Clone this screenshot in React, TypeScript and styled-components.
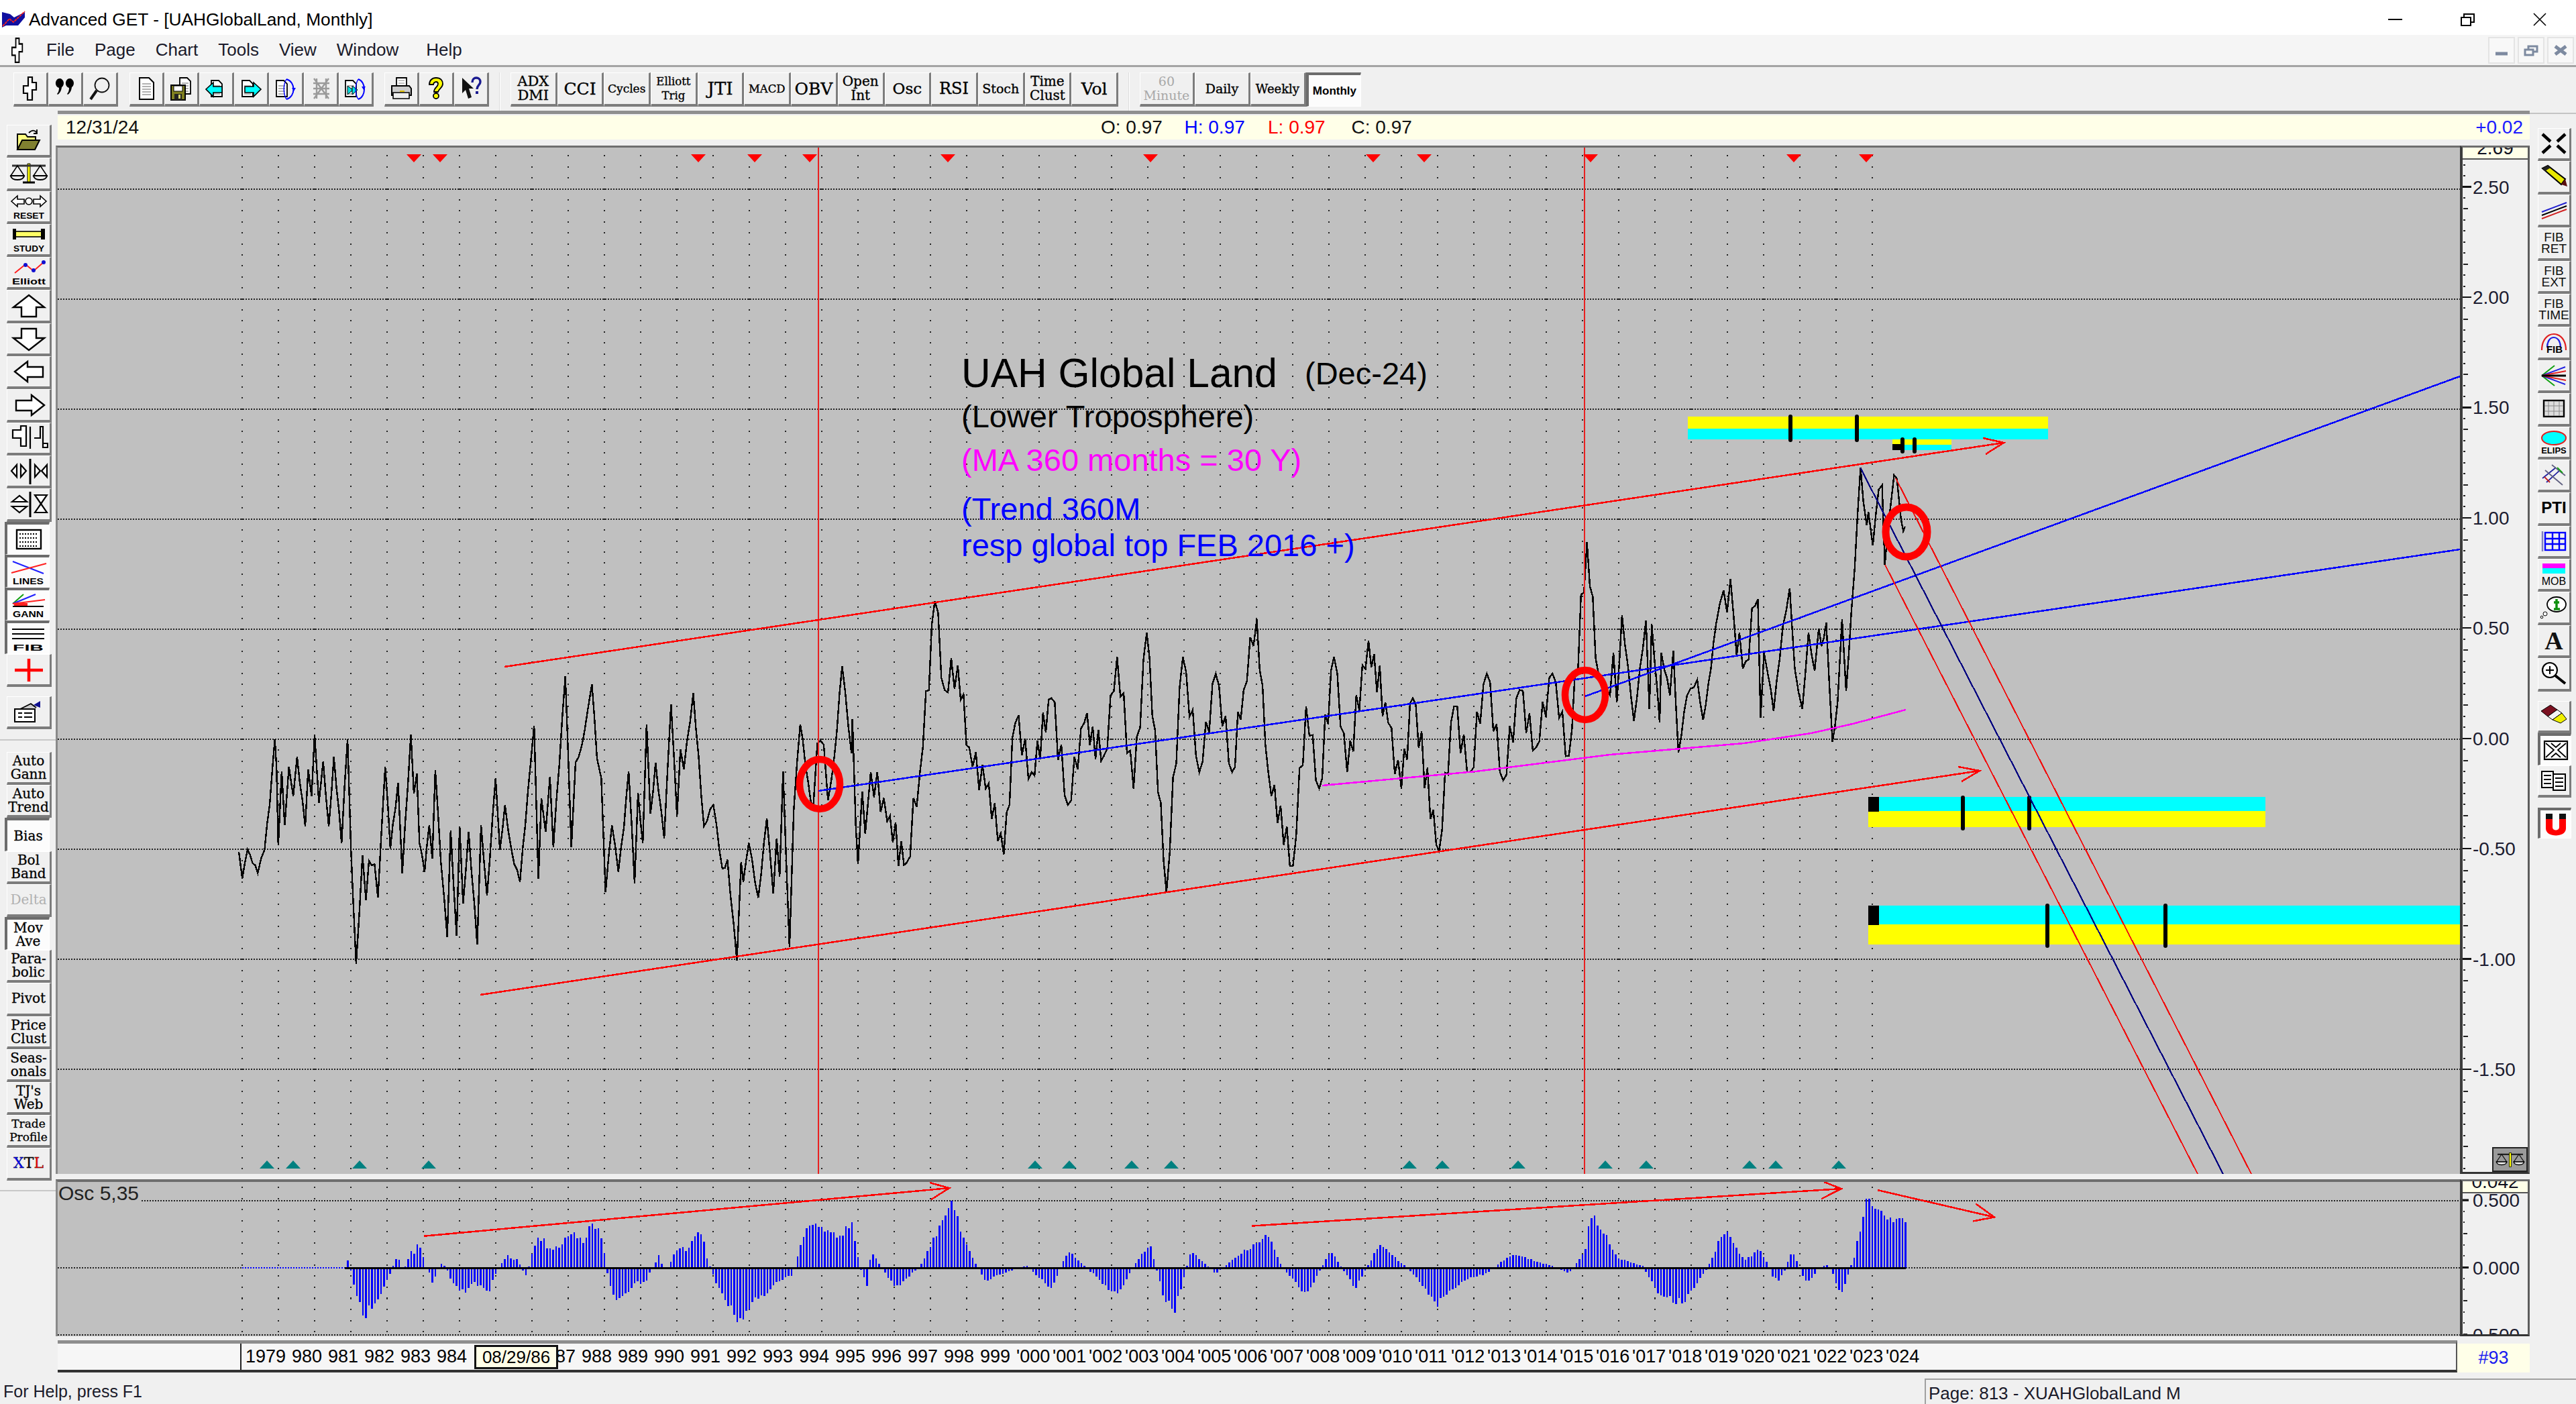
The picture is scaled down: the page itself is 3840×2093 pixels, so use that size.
import React from "react";
import styled, { createGlobalStyle, css } from "styled-components";

const Global = createGlobalStyle`
  html, body { margin: 0; padding: 0; background: #f0f0f0; }
  #root { width: 3840px; height: 2093px; overflow: hidden; }
  * { box-sizing: border-box; }
`;

const SANS = `"Liberation Sans", Arial, sans-serif`;
const SLAB = `"DejaVu Serif", "Liberation Serif", serif`;
const PALE = "#ffffe8";

/* ---------- page structure ---------- */
const Page = styled.div`
  width: 3840px; height: 2093px; display: flex; flex-direction: column;
  background: #f0f0f0; font-family: ${SANS}; color: #000;
`;
const TitleBar = styled.div`
  height: 52px; background: #fff; display: flex; align-items: center;
  padding-left: 3px; font-size: 26.3px; padding-top: 6px;
`;
const TitleText = styled.span`margin-left: 4px; flex: 1;`;
const WinControl = styled.div`
  width: 108px; height: 46px; display: flex; align-items: center; justify-content: center;
`;
const MenuBar = styled.div`
  height: 45px; display: flex; align-items: center; gap: 30px; padding-left: 13px;
  background: #f5f5f5; font-size: 26px; color: #1a1a2a;
`;
const MenuItem = styled.span<{ $extra?: number }>`margin-right: ${(p) => p.$extra ?? 0}px;`;
const MenuLead = styled.span`display: flex; width: 26px;`;
const MdiGroup = styled.div`margin-left: auto; display: flex; gap: 4px; padding-right: 3px;`;
const MdiBtn = styled.div`
  width: 40px; height: 40px; display: flex; align-items: center; justify-content: center;
  border: 2px solid #e4e4e4; background: #f8f8f8;
`;
const ToolRow = styled.div`
  height: 68px; display: flex; align-items: flex-start; padding: 8px 0 0 20px;
  border-top: 3px solid #a4a4a4; background: #f0f0f0;
`;
const BtnGroup = styled.div<{ $gap?: number }>`display: flex; margin-left: ${(p) => p.$gap ?? 0}px;`;
const ToolDivider = styled.div<{ $gap: number }>`
  width: 2px; height: 57px; margin: 0 15px 0 ${(p) => p.$gap}px; background: #dcdcdc; border-right: 1px solid #fff;
`;

const raised = css`
  border-style: solid; border-width: 1px 3px 4px 1px;
  border-color: #fff #7c7c7c #7c7c7c #fff; background: #f0f0f0;
`;
const pressed = css`
  border-style: solid; border-width: 4px 1px 1px 4px;
  border-color: #6c6c6c #fff #fff #6c6c6c; background: #fcfcfc;
`;
const IconBtn = styled.div`
  ${raised}; width: 52px; height: 51px; display: flex; align-items: center; justify-content: center;
`;
const TextBtn = styled.div<{ $size?: number; $w?: number; $down?: boolean; $off?: boolean; $sans?: boolean }>`
  ${(p) => (p.$down ? pressed : raised)};
  width: ${(p) => p.$w ?? 69.7}px; height: 51px; display: flex; align-items: center; justify-content: center;
  text-align: center; overflow: hidden;
  font-family: ${(p) => (p.$sans ? SANS : SLAB)}; font-size: ${(p) => p.$size ?? 19}px; line-height: 21px;
  color: ${(p) => (p.$off ? "#a8a8a8" : "#000")};
  -webkit-text-stroke: ${(p) => (p.$off || p.$sans ? 0 : 0.35)}px ${(p) => (p.$off ? "#a8a8a8" : "#000")};
  font-weight: ${(p) => (p.$sans ? 700 : 400)};
`;

const Main = styled.div`height: 1885px; display: flex;`;
const LeftCol = styled.div`
  width: 83px; padding: 21px 0 0 10px; display: flex; flex-direction: column;
`;
const SideStack = styled.div<{ $pitch: number; $mt?: number }>`
  display: grid; grid-auto-rows: ${(p) => p.$pitch}px; margin-top: ${(p) => p.$mt ?? 0}px;
`;
const SideBtn = styled.div<{ $down?: boolean }>`
  ${(p) => (p.$down ? pressed : raised)};
  width: 67px; display: flex; align-items: center; justify-content: center; text-align: center;
  margin-left: ${(p) => (p.$down ? -3 : 0)}px;
`;
const SideLabel = styled.div<{ $off?: boolean; $size?: number }>`
  font-family: ${SLAB}; font-size: ${(p) => p.$size ?? 20}px; line-height: 20px; white-space: nowrap;
  color: ${(p) => (p.$off ? "#b0b0b0" : "#000")};
  -webkit-text-stroke: ${(p) => (p.$off ? 0 : 0.3)}px ${(p) => (p.$off ? "#b0b0b0" : "#000")};
`;
const Rule = styled.div<{ $mt: number }>`
  height: 2px; background: #c8c8c8; margin: ${(p) => p.$mt}px 0 0 -10px; width: 83px;
`;
const CenterCol = styled.div`width: 3688px; display: flex; flex-direction: column;`;
const InfoBar = styled.div`
  height: 43px; margin-left: 3px; border-top: 5px solid #8e8e8e; padding-top: 2px;
  display: grid; grid-template-columns: 1555px repeat(4, 124.5px) 1fr;
  align-items: center; background: linear-gradient(#f0f0f0 2px, ${PALE} 2px);
  font-size: 28px; padding-left: 0;
`;
const InfoCell = styled.span<{ $c?: string; $pad?: number; $right?: boolean }>`
  color: ${(p) => p.$c ?? "#111"}; padding-left: ${(p) => p.$pad ?? 0}px;
  text-align: ${(p) => (p.$right ? "right" : "left")}; padding-right: ${(p) => (p.$right ? 10 : 0)}px;
  white-space: nowrap;
`;
const ChartRow = styled.div`height: 1533px; margin-top: 9px; display: flex;`;
const ChartPane = styled.div`
  flex: 1; border-top: 3px solid #6e6e6e; border-left: 3px solid #8a8a8a; background: #c0c0c0; position: relative;
`;
const Plot = styled.svg`display: block; width: 100%; height: 100%;`;
const ScaleCol = styled.div`
  width: 104px; border-left: 4px solid #3c3c3c; border-right: 3px solid #5c5c5c; border-top: 3px solid #6e6e6e;
  border-bottom: 3px solid #333; background: #f0f0f0; display: flex; flex-direction: column; position: relative;
`;
const ScaleTop = styled.div`
  height: 18px; background: ${PALE}; border-bottom: 2px solid #555; overflow: hidden; text-align: center;
  font-size: 28px; line-height: 18px; color: #112;
`;
const ScaleTopText = styled.span`display: block; margin-top: -8px;`;
const ScaleSvg = styled.svg`display: block; flex: 1; width: 100%; min-height: 0;`;
const TickText = styled.text`font-family: ${SANS}; font-size: 28px; fill: #1c1c30;`;
const ScaleCorner = styled.div`
  position: absolute; right: 0; bottom: 0; width: 53px; height: 37px; background: #9a9a9a;
  border: 2px solid #222; display: flex; align-items: center; justify-content: center;
`;
const OscRow = styled.div`height: 234px; margin-top: 8px; display: flex;`;
const OscPane = styled.div`
  flex: 1; border-top: 4px solid #6e6e6e; border-left: 3px solid #8a8a8a; background: #c0c0c0; position: relative;
`;
const OscLabel = styled.div`
  position: absolute; left: 1px; top: 2px; font-size: 30px; line-height: 30px; color: #222;
`;
const DateRow = styled.div`height: 48px; margin-top: 6px; display: flex;`;
const DateStrip = styled.div`
  flex: 1; position: relative; margin-left: 3px; background: #f6f6f6;
  border-top: 5px solid #8e8e8e; border-bottom: 4px solid #333; border-right: 2px solid #555;
  display: flex; align-items: center; padding-left: 271px; font-size: 27px; overflow: hidden; white-space: nowrap;
`;
const YearTick = styled.div`position: absolute; left: 272px; top: 0; bottom: 0; width: 2px; background: #222;`;
const YearLabel = styled.span<{ $w: number }>`display: block; width: ${(p) => p.$w}px; text-align: right; flex: none; padding-right: 9px;`;
const DateFlag = styled.div`
  position: absolute; left: 621px; top: 2px; bottom: 1px; width: 125px; border: 3px solid #111; background: ${PALE};
  display: flex; align-items: center; justify-content: center; font-size: 26px;
`;
const BarCount = styled.div`
  width: 108px; background: ${PALE}; margin-top: 5px; display: flex; align-items: center; justify-content: center;
  color: #1a1af0; font-size: 27px;
`;
const RightCol = styled.div`
  width: 69px; padding: 21px 0 0 12px; border-top: 2px solid #c4c4c4; margin-top: 3px; display: flex; flex-direction: column; margin-left: 0;
`;
const RightBtn = styled.div<{ $down?: boolean }>`
  ${(p) => (p.$down ? pressed : raised)};
  width: 50px; display: flex; align-items: center; justify-content: center; text-align: center;
`;
const RightLabel = styled.div`font-size: 19px; line-height: 17px; letter-spacing: 0; color: #111;`;
const RightBold = styled.div`font-size: 24px; font-weight: 700; color: #000;`;
const StatusBar = styled.div`
  height: 43px; display: grid; grid-template-columns: 2869px 1fr; color: #1a1a2a;
`;
const StatusCell = styled.div<{ $sunk?: boolean }>`
  display: flex; align-items: center; padding: 5px 0 0 ${(p) => (p.$sunk ? 4 : 5)}px;
  font-size: ${(p) => (p.$sunk ? 26 : 25)}px;
  ${(p) => p.$sunk && css`border-left: 2px solid #a0a0a0; border-top: 2px solid #a0a0a0; margin-top: 5px;`}
`;

/* ---------- chart text ---------- */
const Note = styled.text<{ $c?: string; $s: number }>`
  font-family: ${SANS}; font-size: ${(p) => p.$s}px; fill: ${(p) => p.$c ?? "#000"};
`;
const Mini = styled.text<{ $s?: number; $w?: number; $serif?: boolean }>`
  font-family: ${(p) => (p.$serif ? `"Liberation Serif", serif` : SANS)}; font-size: ${(p) => p.$s ?? 11}px;
  font-weight: ${(p) => p.$w ?? 700}; text-anchor: middle;
`;

/* ---------- icons ---------- */
const Ic: React.FC<{ w?: number; h?: number; vb?: string; children: React.ReactNode }> = ({ w = 32, h = 36, vb = "0 0 32 36", children }) => (
  <svg width={w} height={h} viewBox={vb} preserveAspectRatio="none" style={{ display: "block" }}>{children}</svg>
);
const Doc = ({ x = 0, y = 0 }: { x?: number; y?: number }) => (
  <g transform={`translate(${x} ${y})`}>
    <path d="M0 0h11l5 5v19H0z" fill="#fff" stroke="#000" strokeWidth="1.8" />
    <path d="M3 8h10M3 12h10M3 16h10M3 20h10" stroke="#999" strokeWidth="1.4" />
  </g>
);
const CursorShape = ({ s = 1 }: { s?: number }) => (
  <polygon transform={`scale(${s})`} points="13,1 19,1 19,9 25,9 25,20 19,20 19,35 12,35 12,25 6,25 6,14 13,14" fill="#fff" stroke="#000" strokeWidth="2.2" />
);
const topIcons: React.ReactNode[] = [
  <Ic key="c"><CursorShape /></Ic>,
  <Ic key="q"><path d="M2 9a6 7 0 1 1 9 7c-.5 5-3 9-6 11l-1-1c2-2 3-5 3-9a6 7 0 0 1-5-8z" /><path d="M17 9a6 7 0 1 1 9 7c-.5 5-3 9-6 11l-1-1c2-2 3-5 3-9a6 7 0 0 1-5-8z" /></Ic>,
  <Ic key="m"><circle cx="19" cy="13" r="10.5" fill="none" stroke="#111" strokeWidth="1.8" /><path d="M11 21L2 34" stroke="#111" strokeWidth="4" /></Ic>,
  <Ic key="d"><path d="M6 2h14l7 7v25H6z" fill="#fff" stroke="#000" strokeWidth="2" /><path d="M10 11h13M10 15h13M10 19h13M10 23h13M10 27h13" stroke="#999" strokeWidth="1.6" /></Ic>,
  <Ic key="s"><Doc x={14} y={2} /><rect x="1" y="13" width="21" height="22" fill="#808020" stroke="#000" strokeWidth="2" /><rect x="5" y="14" width="13" height="8" fill="#fff" stroke="#000" /><rect x="6" y="26" width="11" height="9" fill="#222" /><rect x="12" y="27" width="3" height="6" fill="#d8d870" /></Ic>,
  <Ic key="l"><Doc x={9} y={6} /><polygon points="1,19 12,9 12,15 25,15 25,24 12,24 12,30" fill="#00ffff" stroke="#000" strokeWidth="1.6" /></Ic>,
  <Ic key="r"><Doc x={3} y={6} /><polygon points="31,19 20,9 20,15 7,15 7,24 20,24 20,30" fill="#00ffff" stroke="#000" strokeWidth="1.6" /></Ic>,
  <Ic key="cy"><Doc x={2} y={6} /><path d="M17 4c14 4 14 26 0 30" fill="none" stroke="#0000ff" strokeWidth="2" /><path d="M17 4c-5 8-5 22 0 30" fill="none" stroke="#0000ff" strokeWidth="1.4" /><polygon points="25,17 31,17 28,22" fill="#0000ff" /></Ic>,
  <Ic key="x"><g stroke="#9a9a9a" strokeWidth="2.4" fill="none"><path d="M6 3l22 30M28 3L6 33M5 10h24M5 18h24M5 26h24M10 3v30M24 3v30" /></g></Ic>,
  <Ic key="cy2"><Doc x={1} y={6} /><polygon points="4,14 12,20 4,27" fill="#00e0e0" stroke="#000" /><polygon points="11,14 19,20 11,27" fill="#00e0e0" stroke="#000" /><path d="M20 4c12 4 12 26 0 30" fill="none" stroke="#0000ff" strokeWidth="2" /><path d="M20 4c-5 8-5 22 0 30" fill="none" stroke="#0000ff" strokeWidth="1.4" /><polygon points="25,15 31,15 28,20" fill="#0000ff" /></Ic>,
  <Ic key="p"><path d="M9 2h15v12H9z" fill="#fff" stroke="#000" strokeWidth="1.8" /><path d="M12 6h9M12 10h9" stroke="#888" /><path d="M2 14h26l3 4v10H2z" fill="#ccc" stroke="#000" strokeWidth="2" /><path d="M4 24h24v9H4z" fill="#eee" stroke="#000" strokeWidth="1.6" /><rect x="14" y="21" width="7" height="2" fill="#e0c000" /></Ic>,
  <Ic key="h"><path d="M16 2c7 0 10 4 10 9 0 6-6 7-7 12h-6c0-7 6-7 6-12 0-2-1-3-3-3s-4 2-4 4H6C6 6 10 2 16 2z" fill="#ffff00" stroke="#000" strokeWidth="1.8" /><circle cx="16" cy="29" r="4" fill="#ffff00" stroke="#000" strokeWidth="1.8" /></Ic>,
  <Ic key="hq"><polygon points="3,2 3,25 8,20 12,33 17,31 13,18 20,18" fill="#111" /><path d="M18 9c0-5 3-7 6-7s6 2 6 6c0 5-5 5-5 11" fill="none" stroke="#1a1a90" strokeWidth="3.4" /><rect x="23" y="22" width="4" height="4" fill="#1a1a90" /></Ic>,
];

const SV = ({ c, t }: { c: React.ReactNode; t?: string }) => (
  <Ic w={58} h={40} vb="0 0 58 40">
    {c}
    {t && <Mini x="29" y="38" $s={13} fill="#000" textLength={t === "Elliott" ? 50 : 46} lengthAdjust="spacingAndGlyphs">{t}</Mini>}
  </Ic>
);
const arrow = (pts: string) => <polygon points={pts} fill="#fff" stroke="#000" strokeWidth="2.4" />;
const leftIcons: React.ReactNode[] = [
  <Ic key="o" w={40} h={34} vb="0 0 40 34"><path d="M3 31V8h12l3 4h12v6" fill="#ffff80" stroke="#000" strokeWidth="2" /><path d="M3 31l7-14h26l-7 14z" fill="#808030" stroke="#000" strokeWidth="2" /><path d="M20 6c5-5 9-4 12 0M32 1v6h-5" fill="none" stroke="#000" strokeWidth="1.8" /></Ic>,
  <SV key="sc" c={<g><path d="M27 6h4v28h-4z" fill="#ffff00" stroke="#000" /><path d="M4 9h50" stroke="#333" strokeWidth="3" /><path d="M12 9L2 24h20zM46 9L36 24h20z" fill="none" stroke="#000" strokeWidth="1.6" /><path d="M2 24c1 8 19 8 20 0zM36 24c1 8 19 8 20 0z" fill="#eee" stroke="#000" strokeWidth="2" /><path d="M20 34h18" stroke="#000" strokeWidth="3" /></g>} />,
  <SV key="re" t="RESET" c={<g fill="#fff" stroke="#000" strokeWidth="1.6"><polygon points="3,12 12,4 12,9 22,9 22,16 12,16 12,20" /><polygon points="55,12 46,4 46,9 36,9 36,16 46,16 46,20" /><circle cx="29" cy="12" r="5" /></g>} />,
  <SV key="st" t="STUDY" c={<g><rect x="9" y="8" width="40" height="8" fill="#ffff66" stroke="#000" strokeWidth="1.6" /><rect x="5" y="4" width="5" height="16" /><rect x="47" y="4" width="6" height="16" /></g>} />,
  <SV key="el" t="Elliott" c={<g><path d="M8 21L24 8l12 10L52 4" fill="none" stroke="#ff2020" strokeWidth="2" /><circle cx="24" cy="9" r="3" fill="#1010d0" /><circle cx="36" cy="17" r="3" fill="#1010d0" /><circle cx="51" cy="5" r="3" fill="#1010d0" /></g>} />,
  <SV key="u" c={arrow("29,4 52,22 40,22 40,36 18,36 18,22 6,22")} />,
  <SV key="d" c={arrow("29,37 52,19 40,19 40,5 18,5 18,19 6,19")} />,
  <SV key="l" c={arrow("8,20 27,5 27,13 50,13 50,28 27,28 27,35")} />,
  <SV key="r" c={arrow("52,20 33,5 33,13 10,13 10,28 33,28 33,35")} />,
  <SV key="ud" c={<g fill="#fff" stroke="#000" strokeWidth="2.2"><path d="M5 8h12V2h8v30h-8V20H5z" /><path d="M37 20h9V3h4v25h7v6h-7v-14" /><path d="M31 3v33" fill="none" /></g>} />,
  <SV key="lr" c={<g fill="#fff" stroke="#000" strokeWidth="2.2"><polygon points="3,20 11,11 11,29" /><polygon points="25,20 17,11 17,29" /><polygon points="38,11 46,20 38,29" /><polygon points="56,11 48,20 56,29" /><path d="M31 2v38" strokeWidth="3" /></g>} />,
  <SV key="sq" c={<g fill="#fff" stroke="#000" strokeWidth="2.2"><polygon points="4,17 15,8 26,17" /><polygon points="4,24 15,33 26,24" /><path d="M31 2v38" strokeWidth="3" /><polygon points="38,7 56,7 47,20" /><polygon points="38,33 56,33 47,20" /></g>} />,
  <SV key="g" c={<g><rect x="12" y="6" width="36" height="28" fill="#fff" stroke="#000" strokeWidth="2.4" /><path d="M16 12h28M16 18h28M16 24h28M16 30h28" stroke="#000" strokeWidth="2" strokeDasharray="2 2" /></g>} />,
  <SV key="li" t="LINES" c={<g fill="none" strokeWidth="2"><path d="M6 4l46 18" stroke="#2020ff" /><path d="M4 21L56 7" stroke="#ff2020" /></g>} />,
  <SV key="ga" t="GANN" c={<g fill="none" strokeWidth="2"><path d="M6 18L22 4" stroke="#10a010" /><path d="M6 18L40 4" stroke="#2020ff" /><path d="M6 18l48-6" stroke="#ff2020" /><path d="M6 22h46" stroke="#000" /><path d="M8 19h20" stroke="#ff2020" strokeWidth="4" /></g>} />,
  <SV key="fi" t="FIB" c={<path d="M5 6h48M5 13h48M5 20h48" stroke="#000" strokeWidth="2" />} />,
  <SV key="cr" c={<path d="M29 4v34M8 21h42" stroke="#ff0000" strokeWidth="4.5" />} />,
];
const reportIcon = (
  <Ic w={46} h={36} vb="0 0 46 36"><path d="M10 14L26 6l8 6" fill="#ccc" stroke="#000" strokeWidth="1.8" /><path d="M2 14h30v19H2z" fill="#fff" stroke="#000" strokeWidth="2" /><path d="M7 20h6M16 20h12M7 26h6M16 26h12" stroke="#000" strokeWidth="1.8" /><path d="M30 8l10-6v10z" fill="#101090" /></Ic>
);
const RV = ({ c }: { c: React.ReactNode }) => <Ic w={42} h={38} vb="0 0 42 38">{c}</Ic>;
const rightIcons: React.ReactNode[] = [
  <RV key="x" c={<path d="M4 5l12 11M26 22l12 11M38 5L26 16M16 22L4 33" stroke="#000" strokeWidth="4.5" />} />,
  <RV key="pn" c={<g><path d="M4 6l8-4 26 20-6 8z" fill="#e8e800" stroke="#000" strokeWidth="2" /><path d="M32 30l6-8 3 11z" fill="#5a1010" /><path d="M4 6l8-4 4 3-8 5z" fill="#222" /></g>} />,
  <RV key="tl" c={<g strokeWidth="2" fill="none"><path d="M3 22L40 8" stroke="#2020d0" /><path d="M3 27L40 13" stroke="#000" /><path d="M3 32L40 18" stroke="#d02020" /></g>} />,
  <RightLabel key="fr">FIB<br />RET</RightLabel>,
  <RightLabel key="fe">FIB<br />EXT</RightLabel>,
  <RightLabel key="ft">FIB<br />TIME</RightLabel>,
  <RV key="fa" c={<g fill="none" strokeWidth="2.2"><path d="M3 30C3 -2 39 -2 39 30" stroke="#e02020" /><path d="M11 26C11 6 31 6 31 26" stroke="#2020e0" /><Mini x="22" y="34" $s={15} fill="#000">FIB</Mini></g>} />,
  <RV key="fn" c={<g fill="none" strokeWidth="2"><path d="M3 19L22 4" stroke="#10a010" /><path d="M3 19L22 34" stroke="#10a010" /><path d="M3 19L38 6" stroke="#2020e0" /><path d="M3 19L38 32" stroke="#2020e0" /><path d="M3 19l36-7M3 19l36 7" stroke="#e02020" /><path d="M3 19h36" stroke="#000" strokeWidth="3" /></g>} />,
  <RV key="gr" c={<g><rect x="6" y="7" width="30" height="24" fill="#ddd" stroke="#000" strokeWidth="2.4" /><path d="M13 8v22M21 8v22M29 8v22M7 15h28M7 23h28" stroke="#888" /></g>} />,
  <RV key="el" c={<g><ellipse cx="21" cy="13" rx="18" ry="10" fill="#00ffff" stroke="#e02020" strokeWidth="2" /><Mini x="21" y="36" $s={13} fill="#000">ELIPS</Mini></g>} />,
  <RV key="ch" c={<g strokeWidth="1.8" fill="none"><path d="M4 24L24 8M10 30L30 12" stroke="#2020a0" /><path d="M8 12l26 22M18 4l20 16" stroke="#606080" /><path d="M7 22l8 8" stroke="#c02020" /><path d="M26 8l8 8" stroke="#10a010" /></g>} />,
  <RightBold key="pt">PTI</RightBold>,
  <RV key="tb" c={<g fill="none" stroke="#0000ff" strokeWidth="2.4"><rect x="8" y="6" width="30" height="26" /><path d="M8 15h30M8 23h30M19 6v26M29 6v26" /><path d="M4 4v30" stroke="#8080c0" /></g>} />,
  <RV key="mo" c={<g><rect x="4" y="3" width="34" height="7" fill="#ff00ff" /><rect x="4" y="10" width="34" height="8" fill="#00ffff" /><Mini x="21" y="35" $s={16} $w={400} fill="#000">MOB</Mini></g>} />,
  <RV key="ba" c={<g><ellipse cx="25" cy="14" rx="14" ry="11" fill="#fff" stroke="#000" strokeWidth="1.8" /><circle cx="8" cy="28" r="3" fill="#fff" stroke="#000" /><circle cx="3" cy="33" r="1.8" fill="#fff" stroke="#000" /><path d="M25 6v15M21 21h9M21 11h8" stroke="#109010" strokeWidth="3.5" /></g>} />,
  <RV key="a" c={<Mini x="21" y="32" $s={38} $serif fill="#111">A</Mini>} />,
  <RV key="z" c={<g><circle cx="15" cy="14" r="11" fill="#fff" stroke="#000" strokeWidth="2.2" /><path d="M9 14h12M15 8v12" stroke="#000" strokeWidth="2" /><path d="M23 22l15 12" stroke="#000" strokeWidth="4" /></g>} />,
];
const rightLower: React.ReactNode[] = [
  <RV key="e" c={<g><path d="M2 12L16 3l10 7-14 10z" fill="#7a1020" stroke="#000" /><path d="M12 20l14-10 7 5-14 10z" fill="#f4f4f4" stroke="#000" /><path d="M19 25l14-10 7 9-9 6z" fill="#f0f000" stroke="#000" /></g>} />,
  <RV key="m" c={<g><rect x="4" y="6" width="34" height="27" fill="#fff" stroke="#000" strokeWidth="2.2" /><path d="M6 9l12 10L6 30M36 9L24 19l12 11M14 9l7 6 7-6M14 30l7-6 7 6" fill="none" stroke="#000" strokeWidth="1.8" /></g>} />,
  <RV key="b" c={<g><path d="M3 6h17v24H3z" fill="#fff" stroke="#000" strokeWidth="2" /><path d="M20 10h18v24H20z" fill="#fff" stroke="#000" strokeWidth="2" /><path d="M6 12h11M6 18h11M6 24h11M23 16h12M23 22h12M23 28h12" stroke="#000" strokeWidth="1.8" /></g>} />,
  <RV key="u" c={<g><path d="M6 12h10v12c0 6 10 6 10 0V12h10v14c0 14-30 14-30 0z" fill="#ff0000" /><rect x="6" y="4" width="10" height="8" fill="#111" /><rect x="26" y="4" width="10" height="8" fill="#111" /></g>} />,
];

/* ---------- chart data (page coordinates) ---------- */
const z8 = (a: number[][]) => a.map(([x, y]) => [x / 1.568 + 300, y / 3 + 1000]);
const disp = (a: number[][]) => a.map(([x, y]) => [x * 2.449, y * 2.449]);
const z7 = (a: number[][]) => a.map(([x, y]) => [x / 1.96 + 2400, y / 3 + 580]);
const traceEarly = z8([[88,810],[96,930],[108,800],[120,860],[132,905],[148,800],[160,600],[172,305],[176,430],[180,780],[188,450],[195,690],[205,430],[215,560],[224,385],[243,695],[250,440],[258,560],[265,285],[275,590],[285,405],[298,695],[310,385],[328,770],[342,305],[350,800],[362,1310],[377,825],[385,1025],[392,850],[405,865],[413,1015],[430,430],[442,795],[460,500],[470,905],[490,285],[497,550],[504,460],[510,770],[522,900],[533,690],[540,840],[547,445],[560,850],[575,1190],[583,715],[597,1185],[604,695],[612,1040],[625,720],[645,1225],[654,690],[668,1005],[688,480],[698,800],[710,600],[725,800],[745,945],[770,410],[778,245],[788,930],[795,570],[805,720],[815,475],[823,790],[851,25],[865,790],[875,410],[890,330],[903,180],[913,60],[925,390],[935,480],[945,990],[960,690],[975,900],[988,700],[999,450],[1013,950],[1021,545],[1032,770],[1041,240],[1050,640],[1062,410],[1082,750],[1098,150],[1112,650],[1120,350],[1128,440],[1150,100],[1175,695],[1197,600],[1218,885],[1230,845],[1252,1295],[1262,855],[1267,945],[1280,770],[1302,1015],[1322,660],[1337,995],[1345,750],[1352,920],[1360,450],[1375,1235],[1385,620],[1400,240],[1418,490],[1430,625],[1440,325],[1455,330],[1465,580],[1480,380],[1498,-20],[1520,370],[1522,215],[1530,700],[1535,865],[1545,540],[1552,730]]);
const traceMiddle = disp([[530,470],[540,500],[552,525],[560,470],[569,366],[575,420],[583,405],[590,455],[600,480],[611,520],[618,440],[628,470],[640,425],[650,490],[660,440],[672,460],[680,400],[690,480],[698,385],[710,543],[720,400],[730,470],[740,410],[750,470],[757,420],[765,377],[772,470],[787,527],[795,430],[803,480],[812,400],[820,470],[833,390],[845,440],[853,480],[860,425],[876,518],[885,430],[895,470],[905,410],[915,475],[925,420],[935,455],[945,410],[955,460],[966,330],[973,410]]);
const traceLate = z7([[0,1370],[10,1180],[20,1400],[35,1010],[70,1485],[105,1035],[115,1430],[122,1050],[145,1490],[150,1180],[175,1370],[185,1170],[200,1626],[225,1370],[255,1300],[272,1480],[295,1250],[310,1050],[332,900],[342,1000],[352,850],[370,1190],[378,1090],[388,1250],[405,1210],[415,980],[432,940],[440,1470],[450,1180],[462,1280],[478,1440],[505,1060],[525,890],[540,1250],[562,1430],[580,1090],[598,1260],[610,1070],[618,1150],[632,1045],[650,1578],[665,1400],[678,1030],[690,1350],[705,1000],[715,800],[732,350],[740,500],[750,610],[755,550],[768,700],[785,450],[795,430],[803,785],[820,520],[830,385],[838,400],[850,580],[857,635],[862,615]]);
let seed = 12345;
const rnd = () => { seed = (seed * 1664525 + 1013904223) % 4294967296; return seed / 4294967296; };
const expand = (pts: number[][], amp: number, step = 4.5) => {
  const out: number[][] = [];
  let sign = 1;
  for (let i = 0; i < pts.length - 1; i++) {
    const [x0, y0] = pts[i]; const [x1, y1] = pts[i + 1];
    const n = Math.max(1, Math.round((x1 - x0) / step));
    for (let j = 0; j < n; j++) {
      const t = j / n;
      sign = -sign;
      const wob = j ? sign * (0.4 + rnd() * 0.6) * amp * Math.sqrt(Math.sin(Math.PI * t)) : 0;
      out.push([x0 + (x1 - x0) * t, y0 + (y1 - y0) * t + wob]);
    }
  }
  out.push(pts[pts.length - 1]);
  return out;
};
const pricePoints = [...expand(traceEarly, 6), ...expand(traceMiddle, 34), ...expand(traceLate, 6)]
  .map(([x, y]) => `${x.toFixed(1)},${y.toFixed(1)}`).join(" ");

const z9 = (a: number[][]) => a.map(([x, y]) => [x / 1.206, y / 3 + 1720]);
const z10 = (a: number[][]) => a.map(([x, y]) => [x / 1.265 + 2600, y / 3 + 1720]);
const oscEnv: number[][] = [
  ...z9([[620,470],[628,470],[630,508],[635,585],[645,680],[655,755],[665,690],[680,680],[690,600],[700,545],[705,508],[712,465],[720,475],[725,525],[730,490],[740,425],[745,435],[752,375],[760,445],[765,510],[772,530],[778,585],[785,530],[790,495],[795,485],[803,510],[810,560],[822,610],[838,625],[850,580],[865,600],[880,620],[890,540],[898,510],[905,470],[910,445],[920,465],[930,465],[938,510],[945,545],[950,510],[960,390],[975,355],[985,420],[995,420],[1005,400],[1015,370],[1022,330],[1030,345],[1040,345],[1050,390],[1058,320],[1068,290],[1075,320],[1085,400],[1090,510],[1100,630],[1110,670],[1125,640],[1140,580],[1160,580],[1170,520],[1178,480],[1185,445],[1192,505],[1200,515],[1210,450],[1222,405],[1235,425],[1245,380],[1255,315],[1265,370],[1272,470],[1278,510],[1290,600],[1310,680],[1325,750],[1335,780],[1345,720],[1355,645],[1375,640],[1395,580],[1410,560],[1425,540],[1430,490],[1445,335],[1455,300],[1475,320],[1490,300],[1500,350],[1515,345],[1530,285],[1537,365],[1545,500],[1555,560],[1560,620]]),
  ...disp([[530,760],[545,785],[560,770],[572,745],[578,725],[585,745],[592,765],[600,780],[610,775],[625,770],[640,785],[650,760],[665,775],[680,790],[690,770],[700,755],[708,790],[715,800],[725,760],[740,775],[755,762],[772,750],[780,770],[795,790],[810,760],[825,785],[840,755],[860,775],[875,795],[890,780],[905,775],[920,762],[945,770],[955,775],[965,760],[968,733],[975,745],[985,765],[1000,770],[1010,790],[1025,795],[1040,770],[1050,745]]),
  ...z10([[0,470],[15,450],[25,415],[35,440],[45,490],[55,555],[65,565],[75,530],[82,480],[90,425],[100,480],[106,510],[115,575],[125,560],[133,535],[140,510],[155,490],[165,515],[175,600],[183,625],[195,550],[200,505],[208,450],[218,315],[230,185],[238,160],[245,210],[258,210],[265,250],[280,265],[295,240],[305,260]]),
];
const OSC_BASE = 1889;
const oscAt = (x: number) => {
  for (let i = 0; i < oscEnv.length - 1; i++) {
    const a = oscEnv[i]; const b = oscEnv[i + 1];
    if (x >= a[0] && x <= b[0]) return a[1] + (b[1] - a[1]) * ((x - a[0]) / (b[0] - a[0] || 1));
  }
  return OSC_BASE;
};
let oscPath = "";
for (let x = 514; x <= 2841; x += 4.5) {
  const y = oscAt(x);
  const v = OSC_BASE + (y - OSC_BASE) * (0.8 + rnd() * 0.2);
  oscPath += `M${x.toFixed(1)} ${OSC_BASE}V${v.toFixed(1)}`;
}

const COLS = Array.from({ length: 46 }, (_, i) => 361 + i * 54);
const LEVELS = [2.5, 2, 1.5, 1, 0.5, 0, -0.5, -1, -1.5];
const yOf = (v: number) => 1102 - v * 328.2;
const REDS = [617, 656, 1041, 1125, 1207, 1413, 1715, 2047, 2123, 2371, 2674, 2782];
const TEALS = [398, 437, 536, 639, 1543, 1594, 1687, 1746, 2101, 2150, 2263, 2393, 2454, 2608, 2647, 2741];

const Bar = ({ x, x2, top, mid, bottom, upper, lower }: { x: number; x2: number; top: number; mid: number; bottom: number; upper: string; lower: string }) => (
  <g shapeRendering="crispEdges">
    <rect x={x} y={top} width={x2 - x} height={mid - top} fill={upper} />
    <rect x={x} y={mid} width={x2 - x} height={bottom - mid} fill={lower} />
  </g>
);
const Mark = ({ x, y1, y2 }: { x: number; y1: number; y2: number }) => (
  <path d={`M${x} ${y1}V${y2}`} stroke="#000" strokeWidth="6" strokeLinecap="round" />
);
const Arrow = ({ d, w = 2.5 }: { d: string; w?: number }) => (
  <path d={d} fill="none" stroke="#ff0000" strokeWidth={w} shapeRendering="crispEdges" />
);

const Chart = () => (
  <Plot viewBox="86 220 3581 1530" preserveAspectRatio="none">
    {COLS.map((x) => (
      <path key={x} d={`M${x} 231.3V1748`} stroke="#222" strokeWidth="2" strokeDasharray="2 14.41" shapeRendering="crispEdges" />
    ))}
    {LEVELS.map((v) => (
      <path key={v} d={`M86 ${yOf(v)}H3667`} stroke="#222" strokeWidth="2" strokeDasharray="2 2" shapeRendering="crispEdges" />
    ))}
    <Bar x={2516} x2={3053} top={621} mid={639} bottom={655} upper="#ffff00" lower="#00ffff" />
    <Mark x={2669} y1={621} y2={656} /><Mark x={2768} y1={621} y2={656} />
    <Bar x={2821} x2={2909} top={655} mid={663} bottom={671} upper="#ffff00" lower="#00ffff" />
    <rect x={2821} y={662} width={15} height={9} fill="#000" />
    <Mark x={2836} y1={655} y2={673} /><Mark x={2854} y1={655} y2={673} />
    <Bar x={2785} x2={3377} top={1188} mid={1209} bottom={1233} upper="#00ffff" lower="#ffff00" />
    <rect x={2785} y={1188} width={16} height={22} fill="#000" />
    <Mark x={2926} y1={1189} y2={1235} /><Mark x={3025} y1={1189} y2={1235} />
    <Bar x={2785} x2={3667} top={1350} mid={1378} bottom={1408} upper="#00ffff" lower="#ffff00" />
    <rect x={2785} y={1350} width={16} height={29} fill="#000" />
    <Mark x={3052} y1={1350} y2={1410} /><Mark x={3228} y1={1350} y2={1410} />
    <polyline points={pricePoints} fill="none" stroke="#000" strokeWidth="2.4" shapeRendering="crispEdges" />
    <path d="M1220 220V1750M2362 220V1750" stroke="#e82020" strokeWidth="2" shapeRendering="crispEdges" />
    <Arrow d="M752 994L2987 660M2956 653L2987 660L2960 677" />
    <Arrow d="M716 1483L2951 1149M2919 1143L2951 1149L2924 1165" />
    <path d="M1220 1179L3667 819" stroke="#0000ff" strokeWidth="2.5" fill="none" shapeRendering="crispEdges" />
    <path d="M2363 1038L3667 561" stroke="#0000ff" strokeWidth="2.5" fill="none" shapeRendering="crispEdges" />
    <path d="M2773 697L3314 1750" stroke="#000080" strokeWidth="2.2" fill="none" shapeRendering="crispEdges" />
    <path d="M2826 713L3356 1750M2810 842L3276 1750" stroke="#f01010" strokeWidth="2" fill="none" shapeRendering="crispEdges" />
    <polyline points="1971,1171 2200,1150 2400,1125 2600,1108 2700,1093 2762,1079 2841,1058" fill="none" stroke="#ff00ff" strokeWidth="2.5" shapeRendering="crispEdges" />
    <ellipse cx="1222" cy="1169" rx="30" ry="37" fill="none" stroke="#ff0000" strokeWidth="10.5" />
    <ellipse cx="2363" cy="1036" rx="30" ry="37" fill="none" stroke="#ff0000" strokeWidth="10.5" />
    <ellipse cx="2842" cy="793" rx="31" ry="37" fill="none" stroke="#ff0000" strokeWidth="11" />
    {REDS.map((x) => <polygon key={x} points={`${x - 11},230 ${x + 11},230 ${x},242`} fill="#ff0000" />)}
    {TEALS.map((x) => <polygon key={x} points={`${x - 11},1742 ${x + 11},1742 ${x},1730`} fill="#008080" />)}
    <Note x="1433" y="577" $s={60.5}>UAH Global Land</Note>
    <Note x="1945" y="573" $s={47}>(Dec-24)</Note>
    <Note x="1433" y="637" $s={47}>(Lower Troposphere)</Note>
    <Note x="1433" y="702" $s={47} $c="#ff00ff">(MA 360 months = 30 Y)</Note>
    <Note x="1433" y="775" $s={47} $c="#0000ff">(Trend 360M</Note>
    <Note x="1433" y="829" $s={47} $c="#0000ff">resp global top FEB 2016 +)</Note>
  </Plot>
);

const Osc = () => (
  <Plot viewBox="86 1762 3581 228" preserveAspectRatio="none">
    {COLS.map((x) => (
      <path key={x} d={`M${x} 1769V1986`} stroke="#222" strokeWidth="2" strokeDasharray="2 14.4" shapeRendering="crispEdges" />
    ))}
    <path d="M211 1790H3667M86 1988H3667" stroke="#222" strokeWidth="2" strokeDasharray="2 2" shapeRendering="crispEdges" />
    <path d="M86 1889H361M2841 1889H3667" stroke="#222" strokeWidth="2" strokeDasharray="2 2" shapeRendering="crispEdges" />
    <path d="M361 1889H514" stroke="#0000ff" strokeWidth="2" strokeDasharray="2 2" shapeRendering="crispEdges" />
    <path d={oscPath} stroke="#0000ff" strokeWidth="2.4" fill="none" shapeRendering="crispEdges" />
    <path d="M514 1889H2841" stroke="#000" strokeWidth="3" shapeRendering="crispEdges" />
    <Arrow d="M632 1842L1415 1771M1386 1763L1415 1771L1388 1788" />
    <Arrow d="M1866 1827L2745 1772M2719 1762L2745 1772L2715 1787" />
    <Arrow d="M2799 1774L2973 1814M2945 1794L2973 1814L2941 1820" />
  </Plot>
);

const minorTicks = Array.from({ length: 94 }, (_, i) => 232.3 + i * 16.41);
const MainScale = () => (
  <ScaleSvg viewBox="3671 241 97 1506" preserveAspectRatio="none">
    {minorTicks.map((y, i) => (
      <path key={i} d={`M3672 ${y}h${i % 5 === 0 ? 7 : 3}`} stroke="#222" strokeWidth="2" shapeRendering="crispEdges" />
    ))}
    {LEVELS.map((v) => (
      <g key={v}>
        <path d={`M3671 ${yOf(v)}h13`} stroke="#111" strokeWidth="2.4" shapeRendering="crispEdges" />
        <TickText x="3686" y={yOf(v) + 10}>{v.toFixed(2)}</TickText>
      </g>
    ))}
  </ScaleSvg>
);
const OscScale = () => (
  <ScaleSvg viewBox="3671 1780 97 207" preserveAspectRatio="none">
    {Array.from({ length: 14 }, (_, i) => 1790 + i * 16.4).map((y, i) => (
      <path key={i} d={`M3672 ${y}h${i % 3 === 0 ? 6 : 2}`} stroke="#222" strokeWidth="2" shapeRendering="crispEdges" />
    ))}
    <path d="M3671 1790h9M3671 1889h9" stroke="#111" strokeWidth="3" />
    <TickText x="3686" y="1800">0.500</TickText>
    <TickText x="3686" y="1899">0.000</TickText>
    <TickText x="3686" y="1998">0.500</TickText>
  </ScaleSvg>
);

const topTextBtns: { t: React.ReactNode; s?: number }[] = [
  { t: <>ADX<br />DMI</>, s: 21 }, { t: "CCI", s: 25 }, { t: "Cycles", s: 17 }, { t: <>Elliott<br />Trig</>, s: 16.5 },
  { t: "JTI", s: 26 }, { t: "MACD", s: 16.5 }, { t: "OBV", s: 25 }, { t: <>Open<br />Int</>, s: 20 },
  { t: "Osc", s: 23 }, { t: "RSI", s: 24 }, { t: "Stoch", s: 19 }, { t: <>Time<br />Clust</>, s: 20 }, { t: "Vol", s: 25 },
];
const leftDown = new Set([12, 13, 14, 15]);
const studies: { t: React.ReactNode; down?: boolean; off?: boolean; small?: boolean }[] = [
  { t: <>Auto<br />Gann</> }, { t: <>Auto<br />Trend</> }, { t: "Bias", down: true }, { t: <>Bol<br />Band</> },
  { t: "Delta", off: true }, { t: <>Mov<br />Ave</>, down: true }, { t: <>Para-<br />bolic</> }, { t: "Pivot" },
  { t: <>Price<br />Clust</> }, { t: <>Seas-<br />onals</> }, { t: <>TJ's<br />Web</> }, { t: <>Trade<br />Profile</>, small: true },
];
const YEARS: string[] = ["980", "981", "982", "983", "984", "", "", "87", "988", "989", "990", "991", "992", "993", "994", "995", "996", "997", "998", "999"];
for (let i = 0; i <= 24; i++) YEARS.push(`'${String(i).padStart(3, "0")}`);

export default function App() {
  return (
    <Page>
      <Global />
      <TitleBar>
        <Ic w={36} h={26} vb="0 0 36 26">
          <path d="M0 2l12 3 6 5 16-8v8L24 22H6l-6 3z" fill="#1010a0" />
          <path d="M1 23L11 12l6 5L34 1" fill="none" stroke="#f02020" strokeWidth="2" strokeDasharray="4 1" />
        </Ic>
        <TitleText>Advanced GET - [UAHGlobalLand, Monthly]</TitleText>
        <WinControl><Ic w={21} h={20} vb="0 0 21 20"><path d="M0 10h21" stroke="#000" strokeWidth="2" /></Ic></WinControl>
        <WinControl><Ic w={21} h={20} vb="0 0 21 20"><path d="M1 7h14v12H1zM5 7V2h15v12h-5" fill="none" stroke="#000" strokeWidth="2" /></Ic></WinControl>
        <WinControl><Ic w={20} h={20} vb="0 0 20 20"><path d="M1 1l18 18M19 1L1 19" stroke="#000" strokeWidth="1.6" /></Ic></WinControl>
      </TitleBar>
      <MenuBar>
        <MenuLead><Ic w={26} h={38} vb="0 0 32 36"><CursorShape /></Ic></MenuLead>
        <MenuItem>File</MenuItem><MenuItem>Page</MenuItem><MenuItem>Chart</MenuItem><MenuItem>Tools</MenuItem><MenuItem>View</MenuItem><MenuItem $extra={11}>Window</MenuItem><MenuItem>Help</MenuItem>
        <MdiGroup>
          <MdiBtn><Ic w={22} h={20} vb="0 0 22 20"><path d="M2 15h18" stroke="#7d8aa0" strokeWidth="5" /></Ic></MdiBtn>
          <MdiBtn><Ic w={22} h={20} vb="0 0 22 20"><path d="M2 9h12v8H2zM7 9V4h13v8h-6" fill="none" stroke="#7d8aa0" strokeWidth="3" /></Ic></MdiBtn>
          <MdiBtn><Ic w={22} h={20} vb="0 0 22 20"><path d="M3 4l16 12M19 4L3 16" stroke="#7d8aa0" strokeWidth="5" /></Ic></MdiBtn>
        </MdiGroup>
      </MenuBar>
      <ToolRow>
        <BtnGroup>{topIcons.slice(0, 3).map((c, i) => <IconBtn key={i}>{c}</IconBtn>)}</BtnGroup>
        <BtnGroup $gap={17}>{topIcons.slice(3, 10).map((c, i) => <IconBtn key={i}>{c}</IconBtn>)}</BtnGroup>
        <BtnGroup $gap={16}>{topIcons.slice(10).map((c, i) => <IconBtn key={i}>{c}</IconBtn>)}</BtnGroup>
        <ToolDivider $gap={15} />
        <BtnGroup>{topTextBtns.map((b, i) => <TextBtn key={i} $size={b.s}>{b.t}</TextBtn>)}</BtnGroup>
        <ToolDivider $gap={15} />
        <BtnGroup>
          <TextBtn $w={82} $off $size={19}>60<br />Minute</TextBtn>
          <TextBtn $w={83} $size={19}>Daily</TextBtn>
          <TextBtn $w={83} $size={18}>Weekly</TextBtn>
          <TextBtn $w={82} $down $sans $size={17}>Monthly</TextBtn>
        </BtnGroup>
      </ToolRow>
      <Main>
        <LeftCol>
          <SideStack $pitch={49.3}>
            {leftIcons.map((c, i) => <SideBtn key={i} $down={leftDown.has(i)}>{c}</SideBtn>)}
          </SideStack>
          <SideStack $pitch={49} $mt={14}><SideBtn>{reportIcon}</SideBtn></SideStack>
          <Rule $mt={15} />
          <SideStack $pitch={49.2} $mt={17}>
            {studies.map((s, i) => (
              <SideBtn key={i} $down={s.down}><SideLabel $off={s.off} $size={s.small ? 17 : 20}>{s.t}</SideLabel></SideBtn>
            ))}
            <SideBtn><SideLabel $size={22}><span style={{ color: "#0000ff" }}>X</span>T<span style={{ color: "#ff0000" }}>L</span></SideLabel></SideBtn>
          </SideStack>
          <Rule $mt={14} />
        </LeftCol>
        <CenterCol>
          <InfoBar>
            <InfoCell $pad={12}>12/31/24</InfoCell>
            <InfoCell>O: 0.97</InfoCell>
            <InfoCell $c="#0000ff">H: 0.97</InfoCell>
            <InfoCell $c="#ff0000">L: 0.97</InfoCell>
            <InfoCell>C: 0.97</InfoCell>
            <InfoCell $c="#1a1aff" $right>+0.02</InfoCell>
          </InfoBar>
          <ChartRow>
            <ChartPane><Chart /></ChartPane>
            <ScaleCol>
              <ScaleTop><ScaleTopText>2.69</ScaleTopText></ScaleTop>
              <MainScale />
              <ScaleCorner>
                <Ic w={44} h={30} vb="0 0 58 40"><path d="M4 9h50" stroke="#222" strokeWidth="3" /><path d="M27 6h4v28h-4z" fill="#ffff00" stroke="#000" /><path d="M12 9L2 24h20zM46 9L36 24h20z" fill="none" stroke="#111" strokeWidth="1.6" /><path d="M2 24c1 8 19 8 20 0zM36 24c1 8 19 8 20 0z" fill="#eee" stroke="#000" strokeWidth="2" /></Ic>
              </ScaleCorner>
            </ScaleCol>
          </ChartRow>
          <OscRow>
            <OscPane>
              <Osc />
              <OscLabel>Osc 5,35</OscLabel>
            </OscPane>
            <ScaleCol>
              <ScaleTop><ScaleTopText>0.042</ScaleTopText></ScaleTop>
              <OscScale />
            </ScaleCol>
          </OscRow>
          <DateRow>
            <DateStrip>
              <YearTick />
              <YearLabel $w={78}>1979</YearLabel>
              {YEARS.map((y, i) => <YearLabel key={i} $w={54}>{y}</YearLabel>)}
              <DateFlag>08/29/86</DateFlag>
            </DateStrip>
            <BarCount>#93</BarCount>
          </DateRow>
        </CenterCol>
        <RightCol>
          <SideStack $pitch={49.4}>
            {rightIcons.map((c, i) => <RightBtn key={i}>{c}</RightBtn>)}
          </SideStack>
          <SideStack $pitch={48} $mt={14}>
            {rightLower.slice(0, 3).map((c, i) => <RightBtn key={i} $down={i === 1}>{c}</RightBtn>)}
          </SideStack>
          <SideStack $pitch={46} $mt={15}><RightBtn $down>{rightLower[3]}</RightBtn></SideStack>
        </RightCol>
      </Main>
      <StatusBar>
        <StatusCell>For Help, press F1</StatusCell>
        <StatusCell $sunk>Page: 813 - XUAHGlobalLand M</StatusCell>
      </StatusBar>
    </Page>
  );
}
